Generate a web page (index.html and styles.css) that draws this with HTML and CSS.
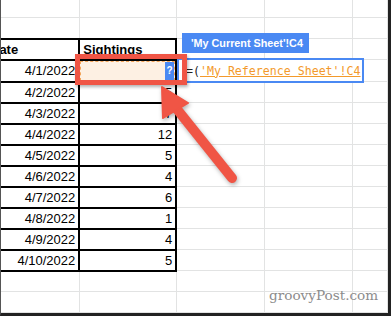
FILE: index.html
```html
<!DOCTYPE html>
<html lang="en">
<head>
    <meta charset="UTF-8">
    <meta name="viewport" content="width=device-width, initial-scale=1.0">
    <title>Sightings sheet</title>
    <link rel="stylesheet" href="styles.css">
</head>
<body>
    <div class="frame">
        <!-- Grade da planilha -->
        <table class="sheet">
            <colgroup>
                <col class="col-a">
                <col class="col-b">
                <col class="col-c">
                <col class="col-d">
                <col class="col-e">
            </colgroup>
            <tr><td></td><td></td><td></td><td></td><td></td></tr>
            <tr><td></td><td></td><td></td><td></td><td></td></tr>
            <tr><td class="b hd">Date</td><td class="b hd">Sightings</td><td></td><td></td><td></td></tr>
            <tr>
                <td class="b num">4/1/2022</td>
                <td class="b sel"><div class="sel-box"><span class="badge">?</span></div></td>
                <td></td><td></td><td></td>
            </tr>
            <tr><td class="b num">4/2/2022</td><td class="b num">5</td><td></td><td></td><td></td></tr>
            <tr><td class="b num">4/3/2022</td><td class="b num">7</td><td></td><td></td><td></td></tr>
            <tr><td class="b num">4/4/2022</td><td class="b num">12</td><td></td><td></td><td></td></tr>
            <tr><td class="b num">4/5/2022</td><td class="b num">5</td><td></td><td></td><td></td></tr>
            <tr><td class="b num">4/6/2022</td><td class="b num">4</td><td></td><td></td><td></td></tr>
            <tr><td class="b num">4/7/2022</td><td class="b num">6</td><td></td><td></td><td></td></tr>
            <tr><td class="b num">4/8/2022</td><td class="b num">1</td><td></td><td></td><td></td></tr>
            <tr><td class="b num">4/9/2022</td><td class="b num">4</td><td></td><td></td><td></td></tr>
            <tr><td class="b num">4/10/2022</td><td class="b num">5</td><td></td><td></td><td></td></tr>
            <tr><td></td><td></td><td></td><td></td><td></td></tr>
            <tr><td></td><td></td><td></td><td></td><td></td></tr>
        </table>

        <!-- Dica com o nome da aba -->
        <div class="tip">'My Current Sheet'!C4</div>

        <!-- Editor de fórmula -->
        <div class="editor">=(<span class="ref">'My Reference Sheet'!C4</span></div>

        <!-- Destaque vermelho -->
        <div class="mark"></div>

        <!-- Seta -->
        <svg class="arrow" width="391" height="316" viewBox="0 0 391 316">
            <g fill="#f05545" stroke="#f05545">
                <line x1="175" y1="108" x2="231" y2="178" stroke-width="10" stroke-linecap="round"/>
                <polygon points="161,87 187,103 162,118" stroke-width="2" stroke-linejoin="round"/>
            </g>
        </svg>

        <div class="watermark">groovyPost.com</div>
    </div>
</body>
</html>
```

FILE: styles.css
```css
body {
    margin: 0;
    background-color: #fff;
    font-family: "Liberation Sans", Arial, sans-serif;
    color: #000;
}
.frame {
    position: relative; /* para as camadas por cima */
    width: 391px;
    height: 316px;
    box-sizing: border-box;
    overflow: hidden;
    border-left: 1px solid #555;
    border-right: 3px solid #222;
    border-bottom: 3px solid #222;
}
.sheet {
    border-collapse: collapse;
    table-layout: fixed;
    margin: -4px 0 0 -16px;
    font-size: 13px;
}
.col-a { width: 98px; }
.col-b { width: 102px; }
.col-c { width: 102px; }
.col-d { width: 102px; }
.col-e { width: 40px; }
.sheet tr {
    height: 21px;
}
.sheet td {
    padding: 0 3px;
    line-height: 15px;
    border: 1px solid #e2e3e3; /* linhas de grade */
    white-space: nowrap;
    overflow: hidden;
}
.sheet td.b {
    border: 2px solid #000;
}
.hd {
    font-weight: bold;
}
.num {
    text-align: right;
}
.sheet td.sel {
    padding: 0;
}
.sel-box {
    height: 18px;
    display: flex;
    justify-content: flex-end;
    background-color: #fdf0e3;
    border: 1px dashed #f3a55a;
}
.badge {
    width: 9px;
    background-color: #4a89f3;
    color: #fff;
    font-size: 10px;
    font-weight: bold;
    text-align: center;
    line-height: 18px;
}
.tip {
    position: absolute;
    left: 181px;
    top: 33px;
    width: 127px;
    height: 20px;
    box-sizing: border-box;
    padding-left: 9px;
    display: flex;
    align-items: center;
    background-color: #4a89f3;
    color: #fff;
    font-size: 10.8px;
    font-weight: bold;
}
.editor {
    position: absolute;
    left: 176px;
    top: 58px;
    width: 187px;
    height: 25px;
    box-sizing: border-box;
    padding-left: 7px;
    display: flex;
    align-items: center;
    border: 2px solid #4a89f3;
    background-color: #fff;
    font-family: "DejaVu Sans Mono", "Liberation Mono", monospace;
    font-size: 11.6px;
    color: #222;
}
.ref {
    color: #f39a2c;
    text-decoration: underline;
}
.mark {
    position: absolute;
    left: 74px;
    top: 54px;
    width: 112px;
    height: 31px;
    box-sizing: border-box;
    border: 5px solid #f05545;
    box-shadow: 1px 2px 3px rgba(0, 0, 0, 0.3);
}
.arrow {
    position: absolute;
    left: 0;
    top: 0;
    filter: drop-shadow(1px 2px 2px rgba(0, 0, 0, 0.3));
}
.watermark {
    position: absolute;
    left: 268px;
    top: 287px;
    font-family: "DejaVu Serif", serif;
    font-size: 13.6px;
    color: #8c8c8c;
}
```
